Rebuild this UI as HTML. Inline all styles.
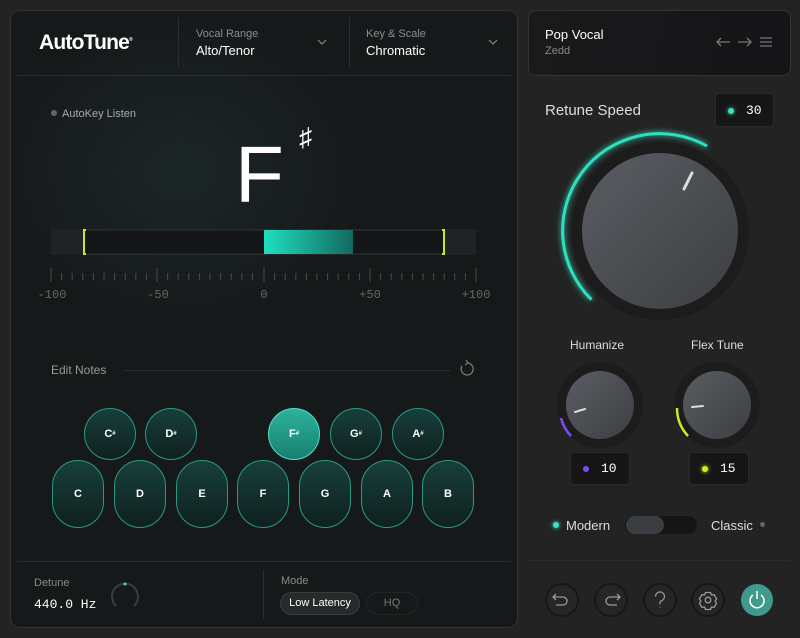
<!DOCTYPE html>
<html><head><meta charset="utf-8"><style>
*{margin:0;padding:0;box-sizing:border-box}
body{width:800px;height:638px;background:#232323;overflow:hidden;font-family:"Liberation Sans",sans-serif;position:relative}
.a{position:absolute;white-space:nowrap}
.mono{font-family:"Liberation Mono",monospace}
.lp{position:absolute;left:10px;top:10px;width:508px;height:618px;border-radius:10px;border:1px solid #333;background:radial-gradient(ellipse 260px 220px at 170px 160px,#1c2628 0%,#16191a 70%),#151718;overflow:hidden}
.nb{position:absolute;border:1.5px solid #2a9a82;background:linear-gradient(180deg,#17403b,#0f201f);color:#fff;font-weight:bold;font-size:11px;display:flex;align-items:center;justify-content:center}
.s{width:52px;height:52px;border-radius:50%}
.n{width:52px;height:68px;border-radius:26px}
.box{position:absolute;background:#161616;border:1px solid #2a2a2a;border-radius:4px;color:#fff;font-family:"Liberation Mono",monospace;font-size:13px}
.dot{position:absolute;border-radius:50%}
</style></head><body>
<div class="lp"></div>
<div class="a" style="left:528px;top:10px;width:263px;height:66px;border-radius:8px;background:linear-gradient(100deg,#1a1a1b,#151518);border:1px solid #333"></div>

<div class="a" style="left:39px;top:31px;font-size:21px;font-weight:bold;color:#fff;letter-spacing:-0.8px">AutoTune<sup style="font-size:5px">®</sup></div>
<div class="a" style="left:178px;top:17px;width:1px;height:50px;background:#2a2d2e"></div>
<div class="a" style="left:349px;top:17px;width:1px;height:50px;background:#2a2d2e"></div>
<div class="a" style="left:17px;top:75px;width:494px;height:1px;background:#2a2d2e"></div>
<div class="a" style="left:196px;top:28px;font-size:11px;color:#8a8d8e">Vocal Range</div>
<div class="a" style="left:196px;top:43px;font-size:13px;color:#fff">Alto/Tenor</div>
<div class="a" style="left:366px;top:28px;font-size:11px;color:#8a8d8e">Key &amp; Scale</div>
<div class="a" style="left:366px;top:43px;font-size:13px;color:#fff">Chromatic</div>
<div class="a" style="left:51px;top:108px;font-size:11px;color:#aaa"><span style="display:inline-block;width:6px;height:6px;border-radius:50%;background:#666;margin-right:5px;vertical-align:1px"></span>AutoKey Listen</div>
<div class="a" style="left:235px;top:132px;font-size:80px;color:#fff;line-height:86px">F</div>
<div class="a" style="left:299px;top:122px;font-size:26px;color:#fff">♯</div>

<div class="a" style="left:51px;top:363px;font-size:12px;color:#999">Edit Notes</div>
<div class="a" style="left:123px;top:370px;width:327px;height:1px;background:#2a2d2e"></div>

<div class="nb s" style="left:84px;top:408px">C<sup style="font-size:6px">#</sup></div>
<div class="nb s" style="left:145px;top:408px">D<sup style="font-size:6px">#</sup></div>
<div class="nb s" style="left:268px;top:408px;background:linear-gradient(180deg,#2cb39b,#17806f);border-color:#4fe0c4">F<sup style="font-size:6px">#</sup></div>
<div class="nb s" style="left:330px;top:408px">G<sup style="font-size:6px">#</sup></div>
<div class="nb s" style="left:392px;top:408px">A<sup style="font-size:6px">#</sup></div>
<div class="nb n" style="left:52px;top:460px">C</div>
<div class="nb n" style="left:114px;top:460px">D</div>
<div class="nb n" style="left:176px;top:460px">E</div>
<div class="nb n" style="left:237px;top:460px">F</div>
<div class="nb n" style="left:299px;top:460px">G</div>
<div class="nb n" style="left:361px;top:460px">A</div>
<div class="nb n" style="left:422px;top:460px">B</div>

<div class="a" style="left:17px;top:561px;width:494px;height:1px;background:#2a2d2e"></div>
<div class="a" style="left:263px;top:570px;width:1px;height:50px;background:#2a2d2e"></div>
<div class="a" style="left:34px;top:577px;font-size:11px;color:#888">Detune</div>
<div class="a mono" style="left:34px;top:597px;font-size:13px;color:#fff">440.0 Hz</div>
<div class="a" style="left:281px;top:575px;font-size:11px;color:#888">Mode</div>
<div class="a" style="left:280px;top:592px;width:80px;height:23px;border-radius:12px;background:#262a2b;border:1px solid #3a3d3e;color:#fff;font-size:11px;text-align:center;line-height:21px">Low Latency</div>
<div class="a" style="left:366px;top:592px;width:52px;height:23px;border-radius:12px;border:1px solid #242627;color:#777;font-size:11px;text-align:center;line-height:21px">HQ</div>

<div class="a" style="left:545px;top:27px;font-size:13px;color:#fff">Pop Vocal</div>
<div class="a" style="left:545px;top:45px;font-size:11px;color:#888">Zedd</div>
<div class="a" style="left:545px;top:102px;font-size:15px;color:#ddd">Retune Speed</div>
<div class="box" style="left:715px;top:93px;width:59px;height:34px"><span class="dot" style="left:12px;top:14px;width:6px;height:6px;background:#3fe0c0;box-shadow:0 0 4px #3fe0c0"></span><span class="a" style="left:30px;top:9px">30</span></div>
<div class="a" style="left:570px;top:338px;font-size:12px;color:#ddd">Humanize</div>
<div class="a" style="left:691px;top:338px;font-size:12px;color:#ddd">Flex Tune</div>
<div class="box" style="left:570px;top:452px;width:60px;height:33px"><span class="dot" style="left:12px;top:13px;width:6px;height:6px;background:#7b4cf0"></span><span class="a" style="left:30px;top:8px">10</span></div>
<div class="box" style="left:689px;top:452px;width:60px;height:33px"><span class="dot" style="left:12px;top:13px;width:6px;height:6px;background:#d0f020;box-shadow:0 0 4px #d0f020"></span><span class="a" style="left:30px;top:8px">15</span></div>
<div class="dot" style="left:553px;top:522px;width:6px;height:6px;background:#3fe0c0;box-shadow:0 0 4px #3fe0c0"></div>
<div class="a" style="left:566px;top:518px;font-size:13px;color:#ddd">Modern</div>
<div class="a" style="left:625px;top:516px;width:72px;height:18px;border-radius:9px;background:#151515"></div>
<div class="a" style="left:626px;top:516px;width:38px;height:18px;border-radius:9px;background:#3a3d42"></div>
<div class="a" style="left:711px;top:518px;font-size:13px;color:#ddd">Classic</div>
<div class="dot" style="left:760px;top:522px;width:5px;height:5px;background:#666"></div>
<div class="a" style="left:528px;top:560px;width:262px;height:1px;background:#2e2e2e"></div>

<svg class="a" style="left:0;top:0" width="800" height="638" viewBox="0 0 800 638">
<defs>
<linearGradient id="tf" x1="0" x2="1"><stop offset="0" stop-color="#1fe0c0"/><stop offset="1" stop-color="#11695e"/></linearGradient>
<linearGradient id="kb" x1="0" y1="0" x2="1" y2="1"><stop offset="0" stop-color="#5a5d62"/><stop offset="1" stop-color="#3c3e42"/></linearGradient>
</defs>
<path d="M318 40l4 4 4-4M489 40l4 4 4-4" stroke="#888" fill="none" stroke-width="1.2"/>
<rect x="51" y="229" width="425" height="26" fill="#202223"/>
<rect x="84" y="230" width="360" height="24" fill="#141617" stroke="#2e3233"/>
<rect x="264" y="230" width="89" height="24" fill="url(#tf)"/>
<path d="M86 230h-2v24h2M442 230h2v24h-2" stroke="#c8e830" stroke-width="2" fill="none"/>
<g stroke="#4a4a4a" stroke-width="1">
<path d="M51 268v14M157 268v14M264 268v14M370 268v14M476 268v14"/>
<path d="M61.6 273v7M72.2 273v7M82.8 273v7M93.4 273v7M104 273v7M114.6 273v7M125.2 273v7M135.8 273v7M146.4 273v7M167.6 273v7M178.2 273v7M188.8 273v7M199.4 273v7M210 273v7M220.6 273v7M231.2 273v7M241.8 273v7M252.4 273v7M274.6 273v7M285.2 273v7M295.8 273v7M306.4 273v7M317 273v7M327.6 273v7M338.2 273v7M348.8 273v7M359.4 273v7M380.6 273v7M391.2 273v7M401.8 273v7M412.4 273v7M423 273v7M433.6 273v7M444.2 273v7M454.8 273v7M465.4 273v7"/>
</g>
<g font-family="Liberation Mono,monospace" font-size="12" fill="#666" text-anchor="middle">
<text x="52" y="298">-100</text><text x="158" y="298">-50</text><text x="264" y="298">0</text><text x="370" y="298">+50</text><text x="476" y="298">+100</text></g>
<path d="M462 366a6 6 0 1 0 5-3" stroke="#777" fill="none" stroke-width="1.3"/><path d="M466 360l2 3-3 2" stroke="#777" fill="none" stroke-width="1.3"/>
<path d="M116 606a13 13 0 1 1 18 0" stroke="#3a3c3d" stroke-width="2" fill="none"/>
<circle cx="125" cy="584" r="1.5" fill="#3fe0c0"/>
<g stroke="#777" stroke-width="1.3" fill="none"><path d="M730 42h-13M721 38l-4 4 4 4M738 42h13M747 38l4 4-4 4M760 38h12M760 42h12M760 46h12"/></g>
<circle cx="660" cy="231" r="89" fill="#1c1c1c"/>
<path d="M591.4 299.6A97 97 0 0 1 707 146" stroke="#2fe0c0" stroke-width="3" fill="none" style="filter:drop-shadow(0 0 3px #2fe0c0)"/>
<circle cx="660" cy="231" r="78" fill="url(#kb)"/>
<path d="M684 189l8-16" stroke="#ddd" stroke-width="3" stroke-linecap="round"/>
<circle cx="600" cy="405" r="43" fill="#1c1c1c"/>
<circle cx="600" cy="405" r="34" fill="url(#kb)"/>
<path d="M561 418A41 41 0 0 0 571 436" stroke="#7b4cf0" stroke-width="2.5" fill="none"/>
<path d="M575 412l10-3" stroke="#ddd" stroke-width="2" stroke-linecap="round"/>
<circle cx="717" cy="405" r="43" fill="#1c1c1c"/>
<circle cx="717" cy="405" r="34" fill="url(#kb)"/>
<path d="M677 408A41 41 0 0 0 688 436" stroke="#cfe82a" stroke-width="2.5" fill="none"/>
<path d="M692 407l11-1" stroke="#ddd" stroke-width="2" stroke-linecap="round"/>
<g fill="#262626" stroke="#171717" stroke-width="2">
<circle cx="562" cy="600" r="16"/><circle cx="611" cy="600" r="16"/><circle cx="660" cy="600" r="16"/><circle cx="708" cy="600" r="16"/></g>
<circle cx="757" cy="600" r="16" fill="#3f9a8b"/>
<g stroke="#999" stroke-width="1.3" fill="none">
<path d="M556 594l-3 3 3 3M553 597h10a4 4 0 0 1 0 8h-7"/>
<path d="M617 594l3 3-3 3M620 597h-10a4 4 0 0 0 0 8h7"/>
<path d="M655.5 596.5a4.5 4.5 0 1 1 6 4.2c-1 .5-1.5 1.2-1.5 2.5v1"/><path d="M660 607.5v.5"/>
<circle cx="708" cy="600" r="2.8"/>
<path d="M705.5 592.5h5l1 2.5 2.6-.3 2.5 4.3-1.6 2 1.6 2-2.5 4.3-2.6-.3-1 2.5h-5l-1-2.5-2.6.3-2.5-4.3 1.6-2-1.6-2 2.5-4.3 2.6.3z" stroke-linejoin="round"/>
</g>
<g stroke="#fff" stroke-width="1.5" fill="none"><path d="M753 595a7 7 0 1 0 8 0"/><path d="M757 591v8"/></g>
</svg>
</body></html>
